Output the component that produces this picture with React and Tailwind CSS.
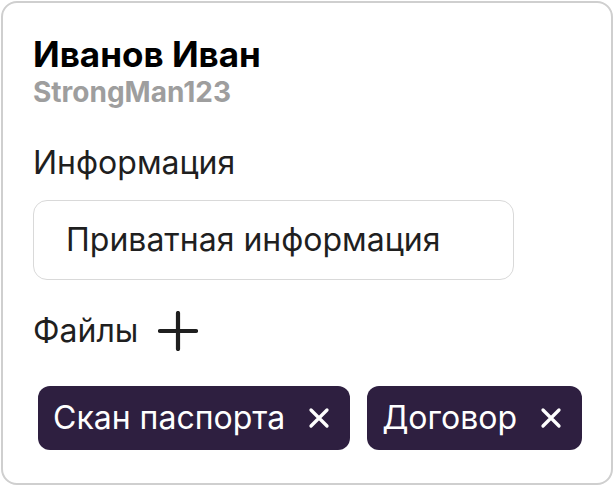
import React from 'react'

const Plus = () => (
  <svg width="40" height="40" viewBox="0 0 40 40" fill="none" stroke="#1f1f1f" strokeWidth="4.2" strokeLinecap="round">
    <path d="M20 2v36M2 20h36" />
  </svg>
)

const Cross = () => (
  <svg width="22" height="22" viewBox="0 0 22 22" fill="none" stroke="#fff" strokeWidth="3.3" strokeLinecap="round">
    <path d="M3 3l16 16M19 3L3 19" />
  </svg>
)

const Chip = ({ label }) => (
  <div className="flex items-center gap-[23px] h-[64px] pl-[15px] pr-[20px] rounded-[12px] bg-[#2e1f40] text-white text-[32px] leading-[40px]">
    <span>{label}</span>
    <Cross />
  </div>
)

export default function App() {
  return (
    <div className="w-[614px] h-[486px] bg-white p-[1px]" style={{ fontFamily: 'Inter, "Noto Sans", sans-serif' }}>
      <div className="h-full border-2 border-[#cfcfcf] rounded-[16px] pl-[30px] pt-[31px]">
        <div className="text-[35px] font-bold leading-[40px] text-black">Иванов Иван</div>
        <div className="mt-[2px] text-[28px] font-bold leading-[32px] text-[#9e9e9e]">StrongMan123</div>

        <div className="mt-[35px] text-[32px] leading-[40px] text-[#1f1f1f]">Информация</div>
        <div className="mt-[17px] w-[481px] h-[80px] flex items-center pl-[32px] border border-[#d9d9d9] rounded-[14px] text-[32px] leading-[40px] text-[#1f1f1f]">
          Приватная информация
        </div>

        <div className="mt-[31px] flex items-center gap-[20px]">
          <span className="text-[32px] leading-[40px] text-[#1f1f1f]">Файлы</span>
          <Plus />
        </div>

        <div className="mt-[35px] ml-[5px] flex gap-[17px]">
          <Chip label="Скан паспорта" />
          <Chip label="Договор" />
        </div>
      </div>
    </div>
  )
}
